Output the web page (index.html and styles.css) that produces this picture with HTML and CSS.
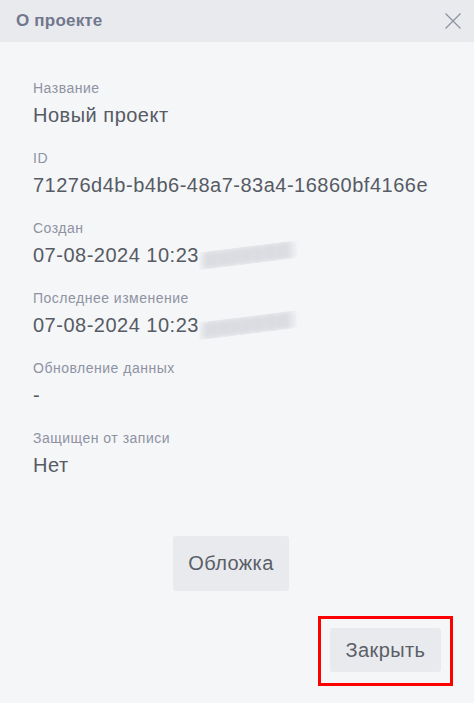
FILE: index.html
```html
<!DOCTYPE html>
<html lang="ru">
<head>
<meta charset="utf-8">
<link rel="stylesheet" href="styles.css">
</head>
<body>
<div class="dialog">
  <header class="head">
    <h1 class="title">О проекте</h1>
    <svg class="close" width="16" height="16" viewBox="0 0 16 16"><path d="M0.5 0.5 L15.5 15.5 M15.5 0.5 L0.5 15.5" stroke="#8b90a0" stroke-width="1.2" fill="none"/></svg>
  </header>
  <main class="body">
    <dl class="props">
      <div class="prop"><dt>Название</dt><dd>Новый проект</dd></div>
      <div class="prop"><dt>ID</dt><dd>71276d4b-b4b6-48a7-83a4-16860bf4166e</dd></div>
      <div class="prop"><dt>Создан</dt><dd>07-08-2024 10:23<span class="blur"></span></dd></div>
      <div class="prop"><dt>Последнее изменение</dt><dd>07-08-2024 10:23<span class="blur"></span></dd></div>
      <div class="prop"><dt>Обновление данных</dt><dd>-</dd></div>
      <div class="prop"><dt>Защищен от записи</dt><dd>Нет</dd></div>
    </dl>
    <div class="cover-row"><button class="btn btn-cover">Обложка</button></div>
    <div class="foot">
      <div class="highlight"><button class="btn btn-close">Закрыть</button></div>
    </div>
  </main>
</div>
</body>
</html>
```
FILE: styles.css
```css
* { box-sizing: border-box; }
html, body { margin: 0; padding: 0; }
body {
  width: 474px;
  height: 703px;
  background: #f5f6f8;
  font-family: "Liberation Sans", Arial, sans-serif;
  overflow: hidden;
}
.dialog { display: flex; flex-direction: column; height: 703px; }
.head {
  flex: 0 0 42px;
  height: 42px;
  background: #e9eaee;
  display: flex;
  align-items: center;
  justify-content: space-between;
  padding: 0 13px 0 16px;
}
.title {
  margin: 0;
  font-size: 17px;
  letter-spacing: 0.2px;
  font-weight: bold;
  color: #72778d;
}
.close { display: block; }
.body { flex: 1 1 auto; min-height: 0; display: flex; flex-direction: column; padding: 0 21px 0 33px; }
.props { margin: 0; padding-top: 36px; display: flex; flex-direction: column; }
.prop { height: 70px; }
dt {
  font-size: 14px;
  line-height: 20px;
  letter-spacing: 0.5px;
  color: #8e92a2;
}
dd {
  margin: 0;
  margin-top: 4px;
  font-size: 20px;
  line-height: 26px;
  letter-spacing: 0.5px;
  color: #565b64;
  display: flex;
  align-items: center;
}
.blur {
  display: inline-block;
  width: 100px;
  height: 18px;
  margin-left: 0;
  background: repeating-linear-gradient(160deg, #c4c6cd 0 2px, #e4e5ea 2px 5px);
  filter: blur(2.5px);
  transform: skewY(-7deg);
  opacity: 0.85;
  -webkit-mask-image: linear-gradient(90deg, rgba(0,0,0,0.3) 0, #000 8%, #000 88%, transparent 100%);
  mask-image: linear-gradient(90deg, rgba(0,0,0,0.3) 0, #000 8%, #000 88%, transparent 100%);
}
.cover-row { display: flex; justify-content: center; margin-top: 38px; padding-right: 24px; }
.btn {
  border: none;
  background: #e9eaee;
  border-radius: 3px;
  font-family: "Liberation Sans", Arial, sans-serif;
  font-size: 20px;
  letter-spacing: 0.4px;
  color: #5a5f68;
  padding: 0;
}
.btn-cover { width: 116px; height: 55px; }
.foot { display: flex; justify-content: flex-end; margin-top: 25px; }
.highlight { border: 3px solid #ff0000; padding: 9px 9px 11px 9px; }
.btn-close { display: block; width: 111px; height: 44px; }
```
